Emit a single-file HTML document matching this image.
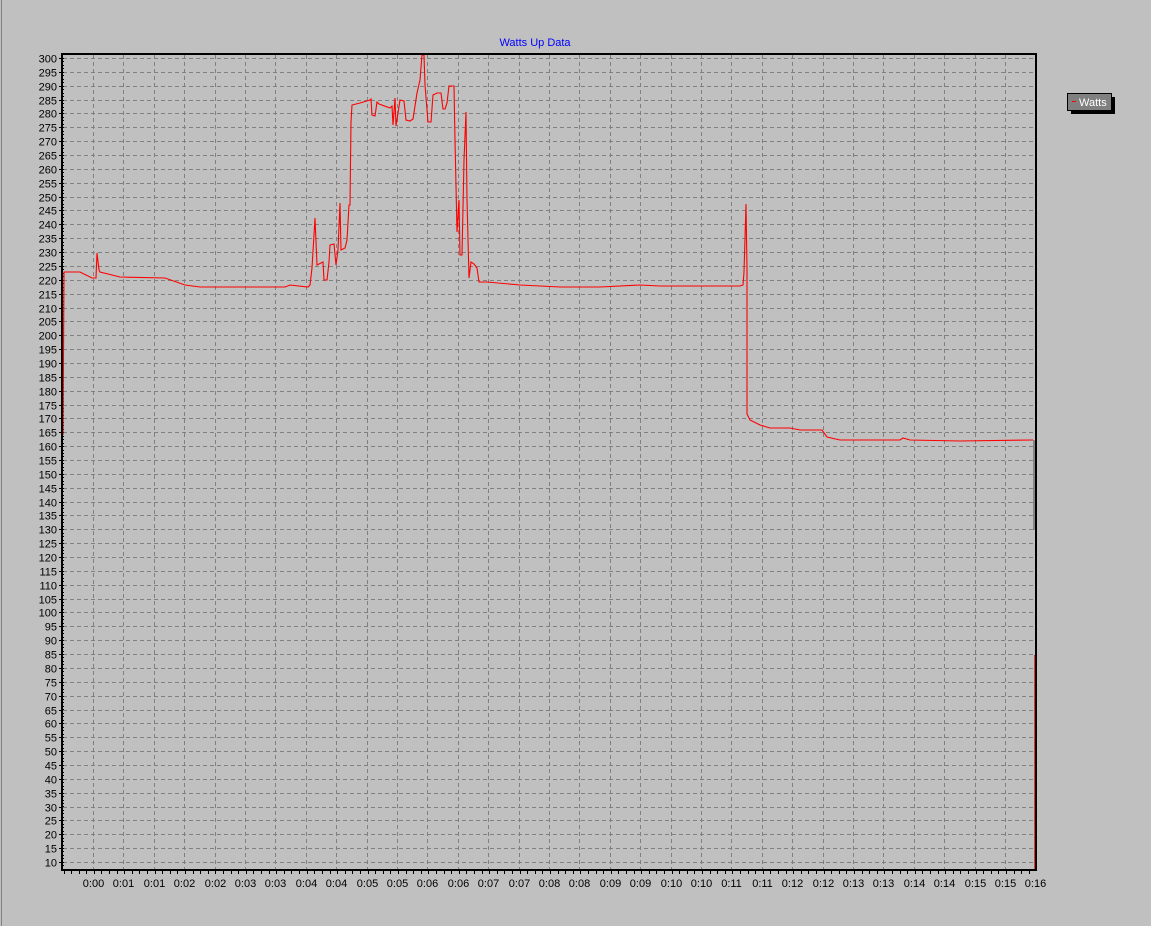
<!DOCTYPE html>
<html><head><meta charset="utf-8"><style>
html,body{margin:0;padding:0;background:#c0c0c0;width:1151px;height:926px;overflow:hidden}
svg{position:absolute;left:0;top:0}
text{font-family:"Liberation Sans",sans-serif;font-size:11px}
</style></head><body>
<svg id="s" width="1151" height="926" xmlns="http://www.w3.org/2000/svg">
<rect width="1151" height="926" fill="#c0c0c0"/>
<line x1="1.5" y1="0" x2="1.5" y2="926" stroke="#808080"/>
<text x="535" y="46" fill="#0000ff" font-size="10" text-anchor="middle">Watts Up Data</text>
<g id="grid" stroke="#808080" stroke-dasharray="4,3" stroke-width="1" shape-rendering="crispEdges"></g>
<g id="lab" fill="#000"></g>
<polyline fill="none" stroke="#ff0000" stroke-width="1.1" points="
63,435 64,272 80,272 86,275 92,278 96,278 97,253 99,270 100,272 120,277 165,278 185,285 200,287 215,287 285,287 290,285 308,287 310,285 312,268 315,218 317,265 323,262 324,280 327,280 329,262 330,245 334,244 336,265 338,250 340,203 341,250 345,248 347,240 349,205 350,205 351,122 352,105 360,103 370,100 371,99 372,115 375,116 377,102 379,104 390,108 392,106 393,125 395,98 396,126 400,100 404,101 406,120 410,121 413,119 417,93 420,80 422,55 424,55 425,85 428,122 431,122 433,95 437,93 441,93 443,109 445,109 447,103 449,86 454,86 455,140 457,232 459,200 460,255 462,255 464,160 466,112 467,200 469,278 471,262 474,264 477,268 479,282 487,282 520,285 560,287 600,287 640,285 660,286 740,286 743,285 744,272 746,204 747,270 747,310 747,414 750,420 760,425 770,428 790,428 800,430 822,430 827,437 840,440 900,440 903,438 910,440 960,441 1033,440"/>
<line x1="1034" y1="440" x2="1034" y2="530" stroke="#606060" stroke-width="1.2"/>
<line x1="1035" y1="655" x2="1035" y2="870" stroke="#ff0000" stroke-width="1.5"/>
<rect x="62" y="54" width="974" height="816" fill="none" stroke="#000" stroke-width="2"/>
<rect x="1071" y="97" width="44" height="17" fill="#000"/>
<rect x="1067.5" y="93.5" width="44" height="17" fill="#808080" stroke="#000"/>
<line x1="1072" y1="101.5" x2="1076" y2="101.5" stroke="#ff0000"/>
<text x="1079" y="106" fill="#fff">Watts</text>
</svg>
<script>
var ns="http://www.w3.org/2000/svg",g=document.getElementById('grid'),l=document.getElementById('lab');
function el(p,t,a,txt){var e=document.createElementNS(ns,t);for(var k in a)e.setAttribute(k,a[k]);if(txt)e.textContent=txt;p.appendChild(e);return e;}
for(var k=0;k<=58;k++){var y=Math.round(58+k*13.862)+0.5;
 el(g,'line',{x1:63,y1:y,x2:1035,y2:y});
 el(l,'line',{x1:59,y1:y,x2:63,y2:y,stroke:'#000'});
 el(l,'text',{x:57,y:y+4,'text-anchor':'end'},String(300-5*k));}
for(var y=58;y<870;y+=3.465){var yy=Math.round(y)+0.5;el(l,'line',{x1:61,y1:yy,x2:64,y2:yy,stroke:'#000'});}
var t=["0:00","0:01","0:01","0:02","0:02","0:03","0:03","0:04","0:04","0:05","0:05","0:06","0:06","0:07","0:07","0:08","0:08","0:09","0:09","0:10","0:10","0:11","0:11","0:12","0:12","0:13","0:13","0:14","0:14","0:15","0:15","0:16"];
for(var k=0;k<32;k++){var x=Math.round(93+k*30.4)+0.5;
 if(k<31)el(g,'line',{x1:x,y1:55,x2:x,y2:869});
 el(l,'text',{x:x,y:887,'text-anchor':'middle'},t[k]);}
for(var x=63.5;x<1036;x+=7.6){var xx=Math.round(x)+0.5;el(l,'line',{x1:xx,y1:870,x2:xx,y2:874,stroke:'#000'});}
</script>
</body></html>
